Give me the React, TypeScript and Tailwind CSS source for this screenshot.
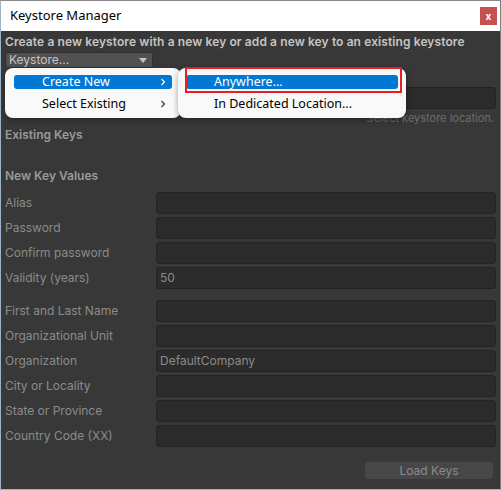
import React from "react";

const labelCls = "text-[12px] leading-[22px] text-[#8b8b8b]";

function Field({ value }: { value?: string }) {
  return (
    <div className="flex-1 h-[22px] rounded-[3px] border border-[#232323] bg-[#2b2b2b] px-[3px] text-[12px] leading-[20px] text-[#8b8b8b]">
      {value ?? ""}
    </div>
  );
}

function Row({ label, value, extra }: { label: string; value?: string; extra?: string }) {
  return (
    <div className={`flex h-[22px] items-center ${extra ?? ""}`}>
      <div className={`w-[151px] ${labelCls}`}>{label}</div>
      <Field value={value} />
    </div>
  );
}

function Chevron({ color }: { color: string }) {
  return (
    <svg width="8" height="10" viewBox="0 0 8 10" className="shrink-0">
      <path d="M2.5 2 L5.5 5 L2.5 8" fill="none" stroke={color} strokeWidth="1.1" />
    </svg>
  );
}

export default function App() {
  return (
    <div
      className="relative w-[501px] h-[490px] overflow-hidden border-l border-b border-r border-t border-l-[#9fb3c8] border-b-[#9fb3c8] border-r-[#7d7d7d] border-t-[#8a8a8a] bg-[#383838]"
      style={{ fontFamily: "Inter, 'Liberation Sans', sans-serif" }}
    >
      {/* Title bar */}
      <div className="flex h-[30px] items-center justify-between bg-white pl-[9px] pr-[3px]">
        <span
          className="text-[13px] text-black"
          style={{ fontFamily: "'Noto Sans', 'Noto Sans CJK SC', sans-serif" }}
        >
          Keystore Manager
        </span>
        <div className="flex h-[18px] w-[17px] items-center justify-center bg-[#c75050] text-[10px] font-bold leading-none text-white">
          x
        </div>
      </div>

      {/* Body */}
      <div className="flex flex-col px-[4px]">
        <div className="mt-[3px] h-[16px] text-[12px] font-semibold leading-[16px] text-[#c4c4c4] whitespace-nowrap tracking-[0.1px]">
          Create a new keystore with a new key or add a new key to an existing keystore
        </div>
        <div className="mt-[2px] flex h-[16px] w-[148px] items-center justify-between rounded-[3px] border border-[#303030] bg-[#515151] pl-[3px] pr-[5px]">
          <span className="text-[12px] leading-[14px] text-[#c4c4c4]">Keystore...</span>
          <svg width="8" height="5" viewBox="0 0 8 5">
            <path d="M0 0 L8 0 L4 5 Z" fill="#c4c4c4" />
          </svg>
        </div>

        <div className="mt-[19px] flex h-[22px]">
          <div className="w-[151px]" />
          <Field />
        </div>
        <div className="mt-[3px] text-right text-[11px] leading-[13px] text-[#6d6d6d] pr-[2px]">
          Select keystore location.
        </div>

        <div className="mt-[3px] text-[12px] font-semibold leading-[14px] text-[#9a9a9a]">Existing Keys</div>
        <div className="mt-[27px] text-[12px] font-semibold leading-[14px] text-[#9a9a9a]">New Key Values</div>

        <div className="mt-[9px] flex flex-col gap-[3px]">
          <Row label="Alias" />
          <Row label="Password" />
          <Row label="Confirm password" />
          <Row label="Validity (years)" value="50" />
          <Row label="First and Last Name" extra="mt-[8px]" />
          <Row label="Organizational Unit" />
          <Row label="Organization" value="DefaultCompany" />
          <Row label="City or Locality" />
          <Row label="State or Province" />
          <Row label="Country Code (XX)" />
        </div>

        <div className="mt-[15px] flex justify-end pr-[3px]">
          <div className="flex h-[17px] w-[128px] items-center justify-center rounded-[3px] bg-[#474747] text-[12px] text-[#8b8b8b]">
            Load Keys
          </div>
        </div>
      </div>

      {/* Context menu */}
      <div
        className="absolute left-[4px] top-[67px] h-[50px] w-[176px] rounded-[8px] bg-[#f9f9f9] shadow-[0_2px_6px_rgba(0,0,0,0.35)] px-[9px] pt-[7px]"
        style={{ fontFamily: "'Noto Sans', 'Noto Sans CJK SC', sans-serif" }}
      >
        <div className="flex h-[14px] items-center justify-between rounded-[3px] bg-[#0078d4] pl-[28px] pr-[5px]">
          <span className="text-[12.5px] leading-[14px] text-white">Create New</span>
          <Chevron color="#ffffff" />
        </div>
        <div className="mt-[8px] flex h-[14px] items-center justify-between pl-[28px] pr-[5px]">
          <span className="text-[12.5px] leading-[14px] text-black">Select Existing</span>
          <Chevron color="#333333" />
        </div>
      </div>

      {/* Submenu */}
      <div
        className="absolute left-[177px] top-[67px] h-[50px] w-[228px] rounded-[8px] bg-[#f9f9f9] shadow-[0_2px_6px_rgba(0,0,0,0.35)] px-[8px] pt-[7px]"
        style={{ fontFamily: "'Noto Sans', 'Noto Sans CJK SC', sans-serif" }}
      >
        <div className="flex h-[14px] items-center rounded-[3px] bg-[#0078d4] pl-[28px]">
          <span className="text-[12.5px] leading-[14px] text-white">Anywhere...</span>
        </div>
        <div className="mt-[8px] flex h-[14px] items-center pl-[28px]">
          <span className="text-[12.5px] leading-[14px] text-black">In Dedicated Location...</span>
        </div>
      </div>

      {/* Red highlight */}
      <div className="absolute left-[184px] top-[66px] h-[26px] w-[217px] border-2 border-[#ed1c24]" />
    </div>
  );
}
